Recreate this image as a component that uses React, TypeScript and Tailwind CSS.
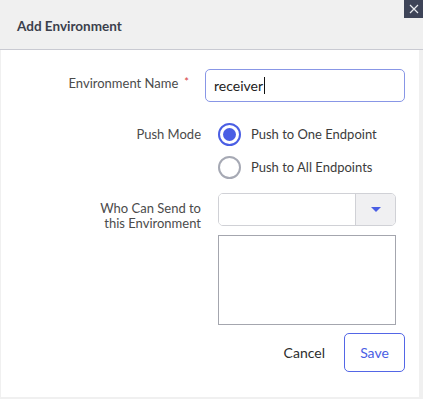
export default function App() {
  return (
    <div
      className="relative h-[399px] w-[423px] overflow-hidden bg-[#f0f0f0] text-[#4b4b4b]"
      style={{ fontFamily: "Lato, 'Open Sans', sans-serif" }}
    >
      <header className="flex h-[50px] items-center border-b border-[#c9cad2] pl-[17px]">
        <h1 className="mt-[3px] text-[13.5px] font-bold text-[#3b3f4c]">Add Environment</h1>
      </header>
      <button
        type="button"
        className="absolute right-0 top-0 flex h-[18px] w-[19px] items-center justify-center bg-[#3e4458] text-white"
      >
        <svg width="10" height="10" viewBox="0 0 10 10" fill="none" stroke="#e9ebf0" strokeWidth="1.2">
          <path d="M1 1l8 8M9 1l-8 8" />
        </svg>
      </button>

      <div className="ml-px mr-[4px] h-[347px] bg-white pt-[19px] text-[13px]">
        <div className="flex items-start">
          <div className="flex w-[200px] justify-end pr-[12px] pt-[5px]">
            <span>Environment Name</span>
            <span className="ml-[6px] text-[11px] text-[#d63c3c]">*</span>
          </div>
          <div className="ml-[4px] flex h-[33px] w-[200px] items-center rounded-[5px] border border-[#8896e6] px-[8px] text-[14px] text-[#222]">
            receiver<span className="ml-px inline-block h-[17px] w-px bg-[#111]" />
          </div>
        </div>

        <div className="mt-[21px] flex items-start">
          <div className="w-[200px] pt-[2px] text-right">Push Mode</div>
          <div className="ml-[17px] flex flex-col gap-[10px]">
            <label className="flex items-center gap-[10px]">
              <span className="flex h-[23px] w-[23px] items-center justify-center rounded-full border-[2.5px] border-[#4a5ee4]">
                <span className="h-[13px] w-[13px] rounded-full bg-[#4a5ee4]" />
              </span>
              <span className="text-[#3c3c3c]">Push to One Endpoint</span>
            </label>
            <label className="flex items-center gap-[10px]">
              <span className="h-[23px] w-[23px] rounded-full border-[2px] border-[#a6a9b4]" />
              <span className="text-[#3c3c3c]">Push to All Endpoints</span>
            </label>
          </div>
        </div>

        <div className="mt-[14px] flex items-start">
          <div className="w-[200px] pt-[8px] text-right leading-[15px]">
            <div>Who Can Send to</div>
            <div>this Environment</div>
          </div>
          <div className="ml-[17px] flex w-[178px] flex-col gap-[9px]">
            <div className="flex h-[33px] overflow-hidden rounded-[5px] border border-[#d0d1d6]">
              <div className="flex-1 bg-white" />
              <div className="flex w-[40px] items-center justify-center border-l border-[#d0d1d6] bg-[#f0f0f2]">
                <svg width="10" height="6" viewBox="0 0 10 6">
                  <path d="M0 0h10L5 5z" fill="#4a5ee4" />
                </svg>
              </div>
            </div>
            <div className="h-[90px] border border-[#a4a6ae]" />
          </div>
        </div>

        <div className="mt-[8px] flex items-center justify-end pr-[14px]">
          <button type="button" className="mr-[19px] text-[14px] text-[#2d2d2d]">
            Cancel
          </button>
          <button
            type="button"
            className="h-[39px] w-[61px] rounded-[5px] border border-[#5366e6] text-[14px] text-[#4a5ee4]"
          >
            Save
          </button>
        </div>
      </div>
    </div>
  );
}
